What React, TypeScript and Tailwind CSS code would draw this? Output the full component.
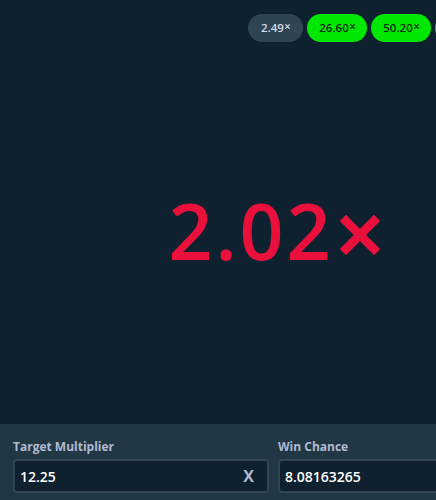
const history = [
  { value: '2.49', win: false },
  { value: '26.60', win: true },
  { value: '50.20', win: true },
];

function Cross({ className }: { className?: string }) {
  return (
    <svg viewBox="0 0 10 10" className={className} fill="none">
      <path d="M1.5 1.5L8.5 8.5M8.5 1.5L1.5 8.5" stroke="currentColor" strokeWidth="2.2" strokeLinecap="square" />
    </svg>
  );
}

export default function App() {
  return (
    <div
      className="h-[500px] w-full overflow-hidden bg-[#0f212e] flex flex-col"
      style={{ fontFamily: '"Open Sans", "Liberation Sans", sans-serif' }}
    >
      {/* game area */}
      <div className="flex-1 flex flex-col">
        <div className="flex gap-[4px] pl-[248px] pt-[14px] overflow-hidden">
          {history.map((h, i) => (
            <div
              key={i}
              className={`h-[28px] shrink-0 rounded-full flex items-center justify-center gap-[1px] text-[11.5px] font-semibold ${
                h.win ? 'w-[60px] bg-[#00e701] text-[#05280a]' : 'w-[55px] bg-[#2f4553] text-[#d5dceb]'
              }`}
            >
              <span>{h.value}</span>
              <Cross className="w-[5px] h-[5px] mb-[3px]" />
            </div>
          ))}
          {/* next result, mostly off screen */}
          <div className="h-[28px] w-[55px] shrink-0 rounded-full bg-[#00e701]" />
        </div>
        <div className="flex items-center justify-center pt-[150px] pl-[112px]">
          <span className="text-[77px] leading-none font-semibold text-[#e9113c] tracking-[3px]">2.02</span>
          <Cross className="w-[40px] h-[40px] ml-[6px] mt-[8px] text-[#e9113c]" />
        </div>
      </div>

      {/* bet settings */}
      <div className="h-[76px] bg-[#213743] flex gap-[9px] px-[13px] pt-[15px] overflow-hidden">
        <div className="w-[256px] shrink-0 flex flex-col gap-[4px]">
          <label className="text-[12px] font-bold text-[#b1bad3] leading-[16px]">Target Multiplier</label>
          <div className="h-[34px] rounded-[4px] border-2 border-[#2f4553] bg-[#0f212e] flex items-center px-[5px]">
            <span className="flex-1 text-[14px] font-semibold text-white">12.25</span>
            <span className="text-[16px] font-bold text-[#b1bad3] mr-[8px]">X</span>
          </div>
        </div>
        <div className="w-[256px] shrink-0 flex flex-col gap-[4px]">
          <label className="text-[12px] font-bold text-[#b1bad3] leading-[16px]">Win Chance</label>
          <div className="h-[34px] rounded-[4px] border-2 border-[#2f4553] bg-[#0f212e] flex items-center px-[5px]">
            <span className="flex-1 text-[14px] font-semibold text-white">8.08163265</span>
          </div>
        </div>
      </div>
    </div>
  );
}
